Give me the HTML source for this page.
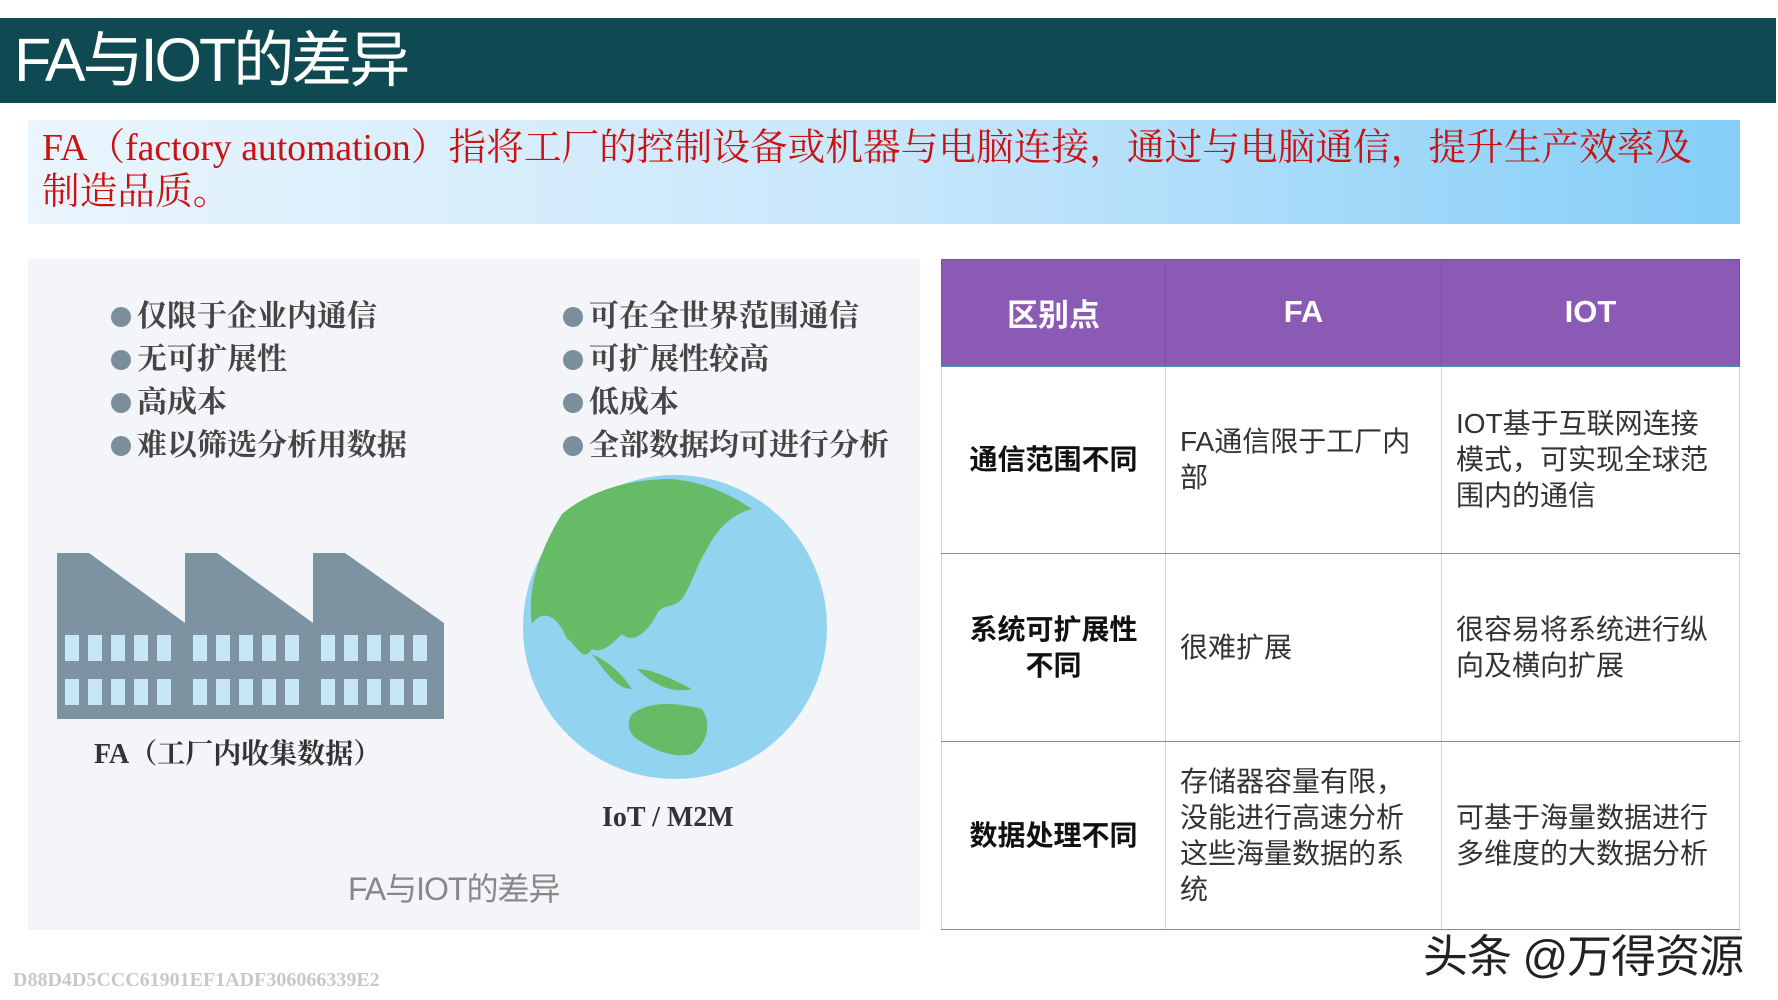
<!DOCTYPE html>
<html><head><meta charset="utf-8"><style>
*{margin:0;padding:0;box-sizing:border-box}
body{width:1778px;height:1000px;background:#fff;position:relative;overflow:hidden;font-family:"Liberation Sans","Noto Sans CJK SC",sans-serif}
.abs{position:absolute}
#hdr{left:0;top:18px;width:1776px;height:85px;background:#0f4a52}
#hdr span{position:absolute;left:14px;top:7px;color:#fff;font-size:61px;letter-spacing:-3px;line-height:70px}
#ban{left:28px;top:120px;width:1712px;height:104px;background:linear-gradient(90deg,#eaf5fd 0%,#c8e7fb 50%,#84cef8 100%)}
#ban p{position:absolute;left:14px;top:6px;width:1700px;color:#cc1111;font-family:"Liberation Serif","Noto Serif CJK SC",serif;font-size:37.7px;line-height:44px;white-space:nowrap}
#lp{left:28px;top:259px;width:892px;height:671px;background:#f3f5f9}
.bl{font-family:"Liberation Serif","Noto Serif CJK SC",serif;font-size:30px;color:#454545;line-height:43px;font-weight:bold}
.bl div::before{content:"";display:inline-block;width:20px;height:20px;border-radius:50%;background:#7a8e9c;margin-right:6px;vertical-align:-1px}
table{position:absolute;left:941px;top:259px;width:799px;height:671px;border-collapse:collapse;table-layout:fixed}
td,th{border:1px solid #c8d8e0;border-bottom:1.5px solid #4aa3c0;border-top:1.5px solid #4aa3c0}
th{background:#8b5ab4;color:#fff;font-size:31px;font-weight:bold;height:106px;border-color:#7d4fa5;border-bottom:2px solid #3a8fb0}
td{font-size:28px;color:#333;line-height:36px;padding:0 14px;vertical-align:middle;height:188px}
td.c3{padding-right:22px}
td.k{font-weight:bold;color:#111;text-align:center;padding:0 18px}
</style></head><body>
<div id="hdr" class="abs"><span>FA与IOT的差异</span></div>
<div id="ban" class="abs"><p>FA（factory automation）指将工厂的控制设备或机器与电脑连接，通过与电脑通信，提升生产效率及<br>制造品质。</p></div>
<div id="lp" class="abs"></div>
<div class="abs bl" style="left:111px;top:295px"><div>仅限于企业内通信</div><div>无可扩展性</div><div>高成本</div><div>难以筛选分析用数据</div></div>
<div class="abs bl" style="left:563px;top:295px"><div>可在全世界范围通信</div><div>可扩展性较高</div><div>低成本</div><div>全部数据均可进行分析</div></div>
<svg class="abs" style="left:57px;top:553px" width="387" height="166" viewBox="0 0 387 166">
<path d="M0 0H32L128 70V0H160L256 70V0H288L387 70V166H0Z" fill="#7d93a1"/>
<g fill="#c7e7f6">
<g id="r"><rect x="8" y="82" width="14" height="26"/><rect x="31" y="82" width="14" height="26"/><rect x="54" y="82" width="14" height="26"/><rect x="77" y="82" width="14" height="26"/><rect x="100" y="82" width="14" height="26"/>
<rect x="136" y="82" width="14" height="26"/><rect x="159" y="82" width="14" height="26"/><rect x="182" y="82" width="14" height="26"/><rect x="205" y="82" width="14" height="26"/><rect x="228" y="82" width="14" height="26"/>
<rect x="264" y="82" width="14" height="26"/><rect x="287" y="82" width="14" height="26"/><rect x="310" y="82" width="14" height="26"/><rect x="333" y="82" width="14" height="26"/><rect x="356" y="82" width="14" height="26"/></g>
<use href="#r" y="44"/></g></svg>
<div class="abs" style="left:94px;top:732px;font-family:'Liberation Serif','Noto Serif CJK SC',serif;font-size:28px;color:#333;font-weight:bold">FA（工厂内收集数据）</div>
<svg class="abs" style="left:522px;top:474px" width="306" height="306" viewBox="0 0 306 306">
<circle cx="153" cy="153" r="152" fill="#92d4f0"/>
<path d="M40 40C70 15 110 5 150 5C180 8 205 18 230 35C210 40 195 55 185 75C175 90 170 110 160 125C150 135 140 130 135 140C125 160 110 170 100 160C90 170 80 180 70 175C60 190 55 170 45 165C35 140 20 135 10 150C5 120 15 80 40 40Z" fill="#66bb66"/>
<path d="M70 180C85 200 95 215 110 215C100 200 90 190 70 180Z" fill="#66bb66"/>
<path d="M115 195C130 195 150 205 170 215C150 220 130 210 115 195Z" fill="#66bb66"/>
<path d="M110 240C130 225 160 230 180 235C190 250 185 270 170 280C150 285 130 275 115 265C105 258 105 248 110 240Z" fill="#66bb66"/>
</svg>
<div class="abs" style="left:602px;top:802px;font-family:'Liberation Serif',serif;font-size:28px;color:#333;font-weight:bold">IoT / M2M</div>
<div class="abs" style="left:348px;top:864px;font-size:32px;color:#888;letter-spacing:-1px">FA与IOT的差异</div>
<table>
<colgroup><col style="width:224px"><col style="width:276px"><col></colgroup>
<tr><th>区别点</th><th>FA</th><th>IOT</th></tr>
<tr><td class="k">通信范围不同</td><td>FA通信限于工厂内部</td><td class="c3">IOT基于互联网连接模式，可实现全球范围内的通信</td></tr>
<tr><td class="k">系统可扩展性不同</td><td>很难扩展</td><td class="c3">很容易将系统进行纵向及横向扩展</td></tr>
<tr><td class="k">数据处理不同</td><td>存储器容量有限，没能进行高速分析这些海量数据的系统</td><td class="c3">可基于海量数据进行多维度的大数据分析</td></tr>
</table>
<div class="abs" style="left:1423px;top:920px;font-size:45px;color:#222;letter-spacing:-1px">头条 @万得资源</div>
<div class="abs" style="left:13px;top:969px;font-family:'Liberation Serif',serif;font-size:20px;color:#c8c8c8;font-weight:bold">D88D4D5CCC61901EF1ADF306066339E2</div>
</body></html>
